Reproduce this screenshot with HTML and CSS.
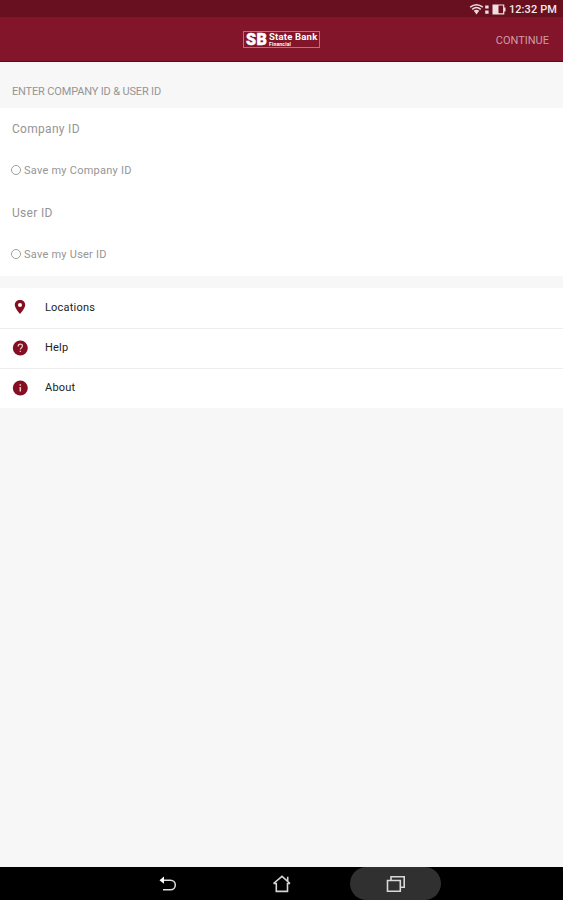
FILE: index.html
```html
<!DOCTYPE html>
<html lang="en">
<head>
<meta charset="utf-8">
<title>State Bank Financial</title>
<link rel="stylesheet" href="styles.css">
</head>
<body>
<div class="status">
  <svg width="38" height="14" viewBox="0 0 38 14">
    <g fill="none" stroke="#f1dfe2" stroke-width="1.5"><path d="M1.2 5.1Q7.5 .3 13.8 5.1M3.2 7.3Q7.5 3.9 11.8 7.3M5.2 9.4Q7.5 7.5 9.8 9.4"/></g>
    <path fill="#f1dfe2" d="M5.6 9.7Q7.5 8.3 9.4 9.7L7.5 12.5zM16.2 3.4h3.4v3.2h-3.4zM16.2 8.6h3.4v3.2h-3.4z"/>
    <path fill="none" stroke="#f1dfe2" stroke-width="1.2" d="M24.1 3h10.6v8.8H24.1z"/>
    <path fill="#f1dfe2" d="M24 3h5.5v9H24zM35 5.4h1.5v4H35z"/>
  </svg>
  <span class="clock">12:32 PM</span>
</div>
<header class="bar">
  <div class="logo">
    <span class="sb">SB</span>
    <span class="names"><span class="bank">State Bank</span><span class="fin">Financial</span></span>
  </div>
  <span class="continue">CONTINUE</span>
</header>
<main>
  <h1 class="heading"><span>ENTER COMPANY ID &amp; USER ID</span></h1>
  <section class="form">
    <div class="field"><span>Company ID</span></div>
    <div class="save"><i class="radio"></i><span>Save my Company ID</span></div>
    <div class="field"><span>User ID</span></div>
    <div class="save"><i class="radio"></i><span>Save my User ID</span></div>
  </section>
  <nav class="links">
    <div class="link">
      <svg width="16" height="16" viewBox="0 0 16 16"><path fill="#850f20" fill-rule="evenodd" d="M8 1C5.1 1 2.8 3 2.8 5.9 2.8 9 8 15 8 15s5.2-6 5.2-9.1C13.2 3 10.9 1 8 1zm0 2.9a2 2 0 1 1 0 4 2 2 0 0 1 0-4z"/></svg>
      <span>Locations</span>
    </div>
    <div class="link">
      <svg width="16" height="16" viewBox="0 0 16 16"><circle cx="8.3" cy="8" r="7.5" fill="#850f20"/><path fill="none" stroke="#e8ccd0" stroke-width="1.2" d="M6.1 6.4C6.1 3.3 10.5 3.4 10.5 6.1 10.5 7.7 8.3 7.7 8.3 9.6M8.3 10.8V12"/></svg>
      <span>Help</span>
    </div>
    <div class="link">
      <svg width="16" height="16" viewBox="0 0 16 16"><circle cx="8.3" cy="8" r="7.5" fill="#850f20"/><path fill="none" stroke="#e8ccd0" stroke-width="1.5" d="M8.3 4.3v1.5M8.3 7v4.6"/></svg>
      <span>About</span>
    </div>
  </nav>
</main>
<footer class="system">
  <div class="key"><svg width="20" height="18" viewBox="0 0 20 18"><path fill="none" stroke="#dedede" stroke-width="1.5" d="M4 5.2h8.5a4.8 4.8 0 0 1 0 9.6H5"/><path fill="#fff" d="M1.5 5.2L6 1.6v7.2z"/></svg></div>
  <div class="key"><svg width="20" height="18" viewBox="0 0 20 18"><path fill="none" stroke="#d4d4d4" stroke-width="1.6" d="M1.5 8.5L10 1.3l8 7.2M15.7 6.2V1.8M1.5 8.5h2.8v7.9h11.2V8.5H18"/></svg></div>
  <div class="key active"><svg width="20" height="18" viewBox="0 0 20 18"><path fill="none" stroke="#d8d8d8" stroke-width="1.6" d="M1.5 5.5h12.8v10.7H1.5zM5 5V1.7h13.2v10.6h-3.6"/></svg></div>
</footer>
</body>
</html>
```
FILE: styles.css
```css
* { box-sizing: border-box; }
body {
  margin: 0;
  height: 900px;
  display: flex;
  flex-direction: column;
  background: #f7f7f7;
  font-family: Roboto, "Liberation Sans", sans-serif;
  font-size: 11px;
  color: #959595;
  overflow: hidden;
}
span { white-space: nowrap; }
.status {
  height: 17px;
  flex: none;
  background: #68101f;
  display: flex;
  align-items: flex-start;
  justify-content: flex-end;
  gap: 2px;
  padding: 2px 6px 0 0;
}
.clock { color: #f5e8ea; font-size: 11px; font-weight: 500; line-height: 15px; letter-spacing: 0.1px; }
.bar {
  height: 45px;
  flex: none;
  background: #82152a;
  border-bottom: 1px solid #730012;
  display: grid;
  grid-template-columns: 1fr 77px 1fr;
  align-items: center;
}
.logo {
  grid-column: 2;
  height: 17px;
  border: 1px solid #b8727e;
  display: flex;
  align-items: center;
  padding-left: 2px;
  color: #fff;
}
.sb { font: 900 16px/15px Roboto, sans-serif; width: 23px; letter-spacing: 0.4px; -webkit-text-stroke: 0.5px #fff; }
.names { display: flex; flex-direction: column; }
.bank { font-size: 9.5px; font-weight: 700; line-height: 9px; letter-spacing: 0.2px; }
.fin { font-size: 5px; font-weight: 700; line-height: 6px; letter-spacing: 0.2px; }
.continue { justify-self: end; margin: 2px 14px 0 0; color: #cf9ca6; font-size: 11px; }
.heading {
  margin: 0;
  height: 46px;
  padding: 21px 0 0 12px;
  font-size: 11px;
  font-weight: 400;
  line-height: 17px;
  letter-spacing: -0.16px;
}
.form { background: #fff; height: 168px; padding-left: 12px; }
.field, .save { height: 42px; display: flex; align-items: center; }
.field { font-size: 12px; letter-spacing: 0.3px; }
.save { font-size: 11px; letter-spacing: 0.24px; gap: 4px; margin-left: -1px; padding-bottom: 2px; }
.radio { width: 10px; height: 10px; border: 1px solid #a0a0a0; border-radius: 50%; margin-right: -1px; }
.links { margin-top: 12px; background: #fff; }
.link {
  height: 40px;
  padding: 0 0 2px 12px;
  display: flex;
  align-items: center;
  gap: 17px;
  color: #222;
  letter-spacing: 0.2px;
}
.link + .link { border-top: 1px solid #eee; }
.system {
  margin-top: auto;
  height: 33px;
  background: #000;
  display: flex;
  justify-content: center;
  gap: 23px;
}
.key { width: 91px; display: flex; align-items: center; justify-content: center; }
.active { background: #303030; border-radius: 17px; }
```
